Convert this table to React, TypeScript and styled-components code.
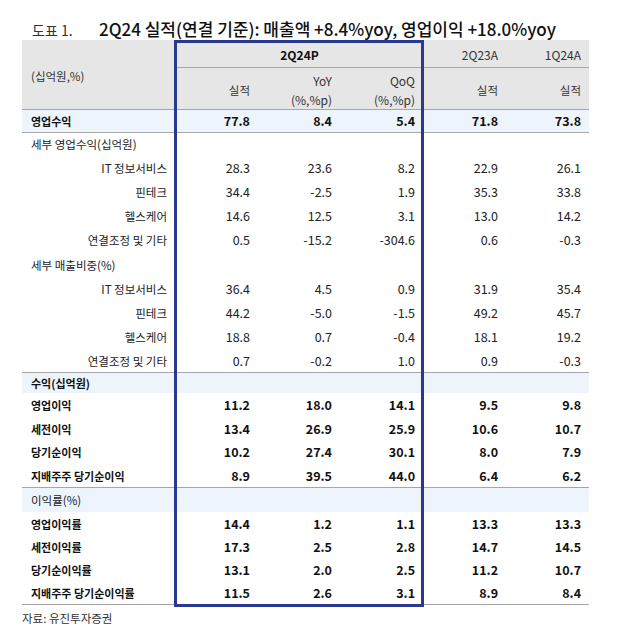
import styled, { createGlobalStyle } from 'styled-components';

const GlobalStyle = createGlobalStyle`
  body {
    margin: 0;
    background: #fff;
    font-family: "Noto Sans CJK KR", "Noto Sans", sans-serif;
    color: #222;
  }
`;

const Page = styled.div`
  padding: 18px 0 0 22px;
  width: 567px;
`;

const TitleBar = styled.div`
  display: flex;
  align-items: baseline;
  height: 22px;
  line-height: 22px;
`;

const Caption = styled.span`
  flex: 0 0 77px;
  padding-left: 10px;
  box-sizing: border-box;
  font-size: 14px;
  color: #333;
`;

const Heading = styled.span`
  font-size: 17px;
  font-weight: 500;
  color: #111;
  white-space: nowrap;
`;

const TableWrap = styled.div`
  position: relative;
`;

const Table = styled.table`
  width: 567px;
  table-layout: fixed;
  border-collapse: collapse;
`;

const Highlight = styled.div`
  position: absolute;
  left: 152px;
  top: 0;
  width: 250px;
  height: 567px;
  border: 3px solid #2a3990;
  box-sizing: border-box;
  pointer-events: none;
`;

const HeadRow = styled.tr<{ $h: number }>`
  height: ${p => p.$h}px;
  background: #e6e6e6;
`;

const Th = styled.th<{ $align?: string; $bold?: boolean; $line?: boolean }>`
  padding: 3px 8px 0 9px;
  text-align: ${p => p.$align || 'right'};
  vertical-align: middle;
  font-size: 12px;
  font-weight: ${p => (p.$bold ? 700 : 400)};
  color: ${p => (p.$bold ? '#111' : '#333')};
  line-height: 19px;
  border-bottom: ${p => (p.$line ? '1px solid #a6a6a6' : 'none')};
  white-space: nowrap;
`;

const Sub = styled.span`
  font-size: 11.5px;
`;

const Tr = styled.tr<{ $h: number; $band?: boolean; $top?: boolean; $bottom?: boolean }>`
  height: ${p => p.$h}px;
  background: ${p => (p.$band ? '#eef4fb' : '#fff')};

  & > td {
    border-top: ${p => (p.$top ? '1px solid #a6a6a6' : 'none')};
    border-bottom: ${p => (p.$bottom ? '1px solid #a6a6a6' : 'none')};
  }
`;

const Label = styled.td<{ $bold?: boolean; $right?: boolean }>`
  padding: 0 8px 0 9px;
  text-align: ${p => (p.$right ? 'right' : 'left')};
  font-size: ${p => (p.$bold ? 11 : 11.5)}px;
  font-weight: ${p => (p.$bold ? 700 : 400)};
  color: ${p => (p.$bold ? '#111' : '#222')};
  white-space: nowrap;
  line-height: 16px;
`;

const Num = styled.td<{ $bold?: boolean }>`
  padding: 0 8px 0 0;
  text-align: right;
  font-size: 12.5px;
  font-weight: ${p => (p.$bold ? 700 : 400)};
  color: ${p => (p.$bold ? '#111' : '#222')};
  line-height: 16px;
`;

const Source = styled.div`
  padding-top: 5px;
  font-size: 11.5px;
  line-height: 16px;
  color: #333;
`;

type Line = [string, string, string, string, string, string];

const opIncome: Line = ['영업수익', '77.8', '8.4', '5.4', '71.8', '73.8'];

const revenueDetail: Line[] = [
  ['IT 정보서비스', '28.3', '23.6', '8.2', '22.9', '26.1'],
  ['핀테크', '34.4', '-2.5', '1.9', '35.3', '33.8'],
  ['헬스케어', '14.6', '12.5', '3.1', '13.0', '14.2'],
  ['연결조정 및 기타', '0.5', '-15.2', '-304.6', '0.6', '-0.3'],
];

const mixDetail: Line[] = [
  ['IT 정보서비스', '36.4', '4.5', '0.9', '31.9', '35.4'],
  ['핀테크', '44.2', '-5.0', '-1.5', '49.2', '45.7'],
  ['헬스케어', '18.8', '0.7', '-0.4', '18.1', '19.2'],
  ['연결조정 및 기타', '0.7', '-0.2', '1.0', '0.9', '-0.3'],
];

const profits: Line[] = [
  ['영업이익', '11.2', '18.0', '14.1', '9.5', '9.8'],
  ['세전이익', '13.4', '26.9', '25.9', '10.6', '10.7'],
  ['당기순이익', '10.2', '27.4', '30.1', '8.0', '7.9'],
  ['지배주주 당기순이익', '8.9', '39.5', '44.0', '6.4', '6.2'],
];

const margins: Line[] = [
  ['영업이익률', '14.4', '1.2', '1.1', '13.3', '13.3'],
  ['세전이익률', '17.3', '2.5', '2.8', '14.7', '14.5'],
  ['당기순이익률', '13.1', '2.0', '2.5', '11.2', '10.7'],
  ['지배주주 당기순이익률', '11.5', '2.6', '3.1', '8.9', '8.4'],
];

function DataRow({
  line,
  h,
  bold,
  right,
  band,
  bottom,
}: {
  line: Line;
  h: number;
  bold?: boolean;
  right?: boolean;
  band?: boolean;
  bottom?: boolean;
}) {
  const [label, ...values] = line;
  return (
    <Tr $h={h} $band={band} $bottom={bottom}>
      <Label $bold={bold} $right={right}>{label}</Label>
      {values.map((v, i) => (
        <Num key={i} $bold={bold}>{v}</Num>
      ))}
    </Tr>
  );
}

function GroupRow({ label, h, band, bold, top }: { label: string; h: number; band?: boolean; bold?: boolean; top?: boolean }) {
  return (
    <Tr $h={h} $band={band} $top={top}>
      <Label $bold={bold}>{label}</Label>
      <td colSpan={5} />
    </Tr>
  );
}

export default function App() {
  return (
    <>
      <GlobalStyle />
      <Page>
        <TitleBar>
          <Caption>도표 1.</Caption>
          <Heading>2Q24 실적(연결 기준): 매출액 +8.4%yoy, 영업이익 +18.0%yoy</Heading>
        </TitleBar>
        <TableWrap>
          <Table>
            <colgroup>
              <col style={{ width: 153 }} />
              <col style={{ width: 83 }} />
              <col style={{ width: 82 }} />
              <col style={{ width: 83 }} />
              <col style={{ width: 83 }} />
              <col style={{ width: 83 }} />
            </colgroup>
            <thead>
              <HeadRow $h={27}>
                <Th rowSpan={2} $align="left" $line>
                  <Sub>(십억원,%)</Sub>
                </Th>
                <Th colSpan={3} $align="center" $bold $line>2Q24P</Th>
                <Th $line>2Q23A</Th>
                <Th $line>1Q24A</Th>
              </HeadRow>
              <HeadRow $h={41}>
                <Th $line><Sub>실적</Sub></Th>
                <Th $line>YoY<br />(%,%p)</Th>
                <Th $line>QoQ<br />(%,%p)</Th>
                <Th $line><Sub>실적</Sub></Th>
                <Th $line><Sub>실적</Sub></Th>
              </HeadRow>
            </thead>
            <tbody>
              <DataRow line={opIncome} h={23} bold band bottom />
              <GroupRow label="세부 영업수익(십억원)" h={24.1} />
              {revenueDetail.map(l => (
                <DataRow key={l[0]} line={l} h={24.1} right />
              ))}
              <GroupRow label="세부 매출비중(%)" h={24.1} />
              {mixDetail.map(l => (
                <DataRow key={l[0]} line={l} h={24.1} right />
              ))}
              <GroupRow label="수익(십억원)" h={20} band bold top />
              {profits.map(l => (
                <DataRow key={l[0]} line={l} h={23.75} bold />
              ))}
              <GroupRow label="이익률(%)" h={24} band top />
              {margins.map((l, i) => (
                <DataRow key={l[0]} line={l} h={23.25} bold bottom={i === margins.length - 1} />
              ))}
            </tbody>
          </Table>
          <Highlight />
        </TableWrap>
        <Source>자료: 유진투자증권</Source>
      </Page>
    </>
  );
}
